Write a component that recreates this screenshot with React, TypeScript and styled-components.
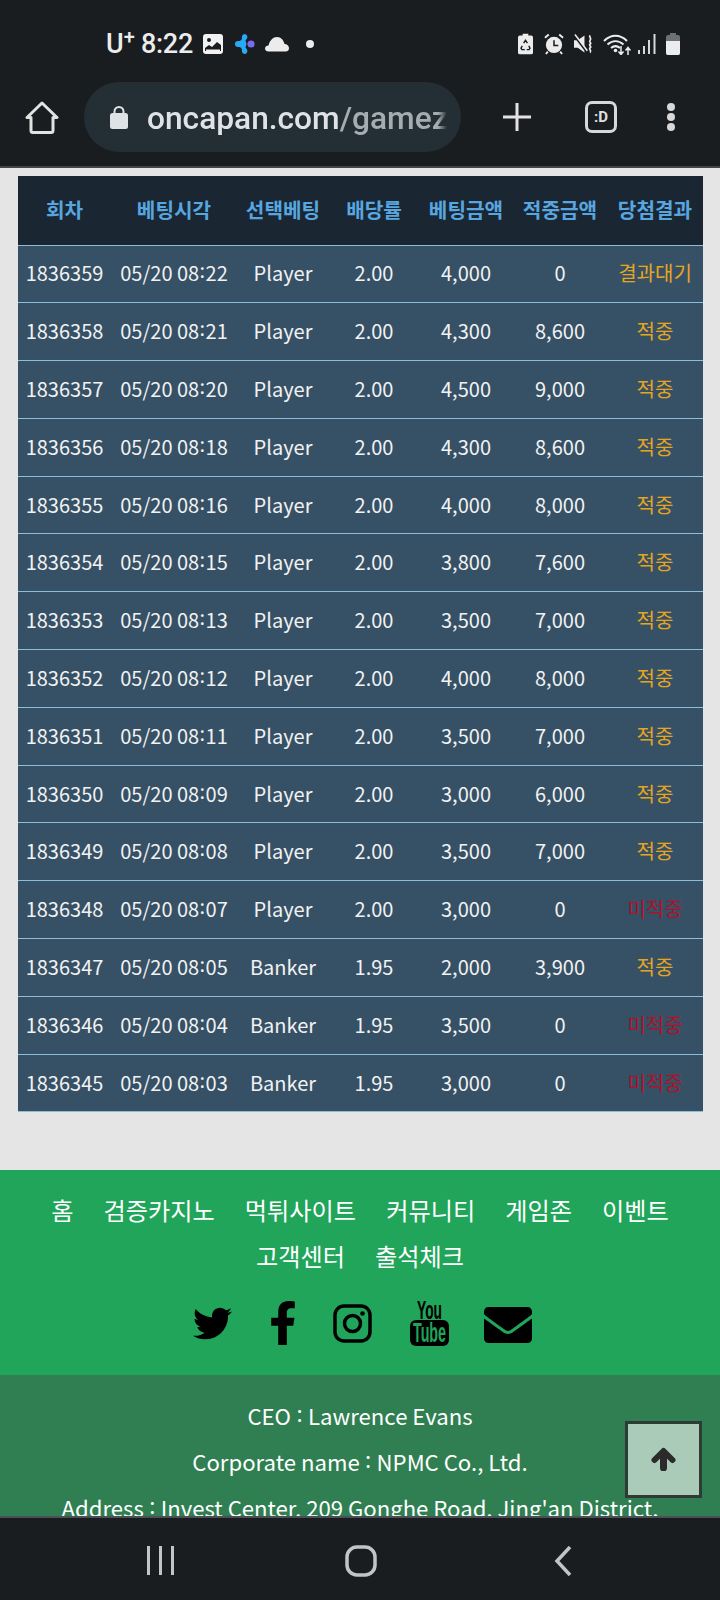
import * as React from "react";
import styled, { createGlobalStyle } from "styled-components";
import { FaEnvelope, FaFacebookF, FaTwitter } from "react-icons/fa";

const GlobalStyle = createGlobalStyle`
  html, body {
    margin: 0;
    padding: 0;
    background: #1a1d20;
  }
  * {
    box-sizing: border-box;
  }
`;

const Screen = styled.div`
  position: relative;
  width: 720px;
  height: 1600px;
  display: flex;
  flex-direction: column;
  overflow: hidden;
  font-family: "Noto Sans CJK KR", "Noto Sans", sans-serif;
`;

const Chrome = styled.header`
  flex: none;
  height: 168px;
  background: #1a1d20;
  border-bottom: 2px solid #3f474c;
`;

const StatusBar = styled.div`
  height: 82px;
  padding: 30px 40px 0 106px;
  display: flex;
  align-items: flex-start;
  justify-content: space-between;
  font-family: Roboto, sans-serif;
  color: #ececec;
`;

const StatusLeft = styled.div`
  display: flex;
  align-items: center;
  height: 28px;
`;

const Carrier = styled.span`
  font-size: 27px;
  font-weight: 500;
  display: flex;
  align-items: flex-start;
  line-height: 28px;
  width: 35px;

  sup {
    font-size: 20px;
    line-height: 20px;
    margin-top: -3px;
  }
`;

const Clock = styled.span`
  font-size: 27px;
  font-weight: 500;
  line-height: 28px;
  width: 62px;
  letter-spacing: -0.3px;
`;

const StatusRight = styled.div`
  display: flex;
  align-items: center;
  height: 28px;
`;

const Toolbar = styled.div`
  height: 84px;
  padding: 0 0 14px 0;
  display: flex;
  align-items: center;
`;

const ToolSlot = styled.div<{ $w: number }>`
  flex: none;
  width: ${(p) => p.$w}px;
  display: flex;
  align-items: center;
  justify-content: center;
`;

const UrlPill = styled.div`
  flex: none;
  width: 377px;
  height: 70px;
  border-radius: 35px;
  background: #232f35;
  display: flex;
  align-items: center;
  padding-left: 26px;
`;

const UrlText = styled.div`
  margin-left: 19px;
  padding-top: 2px;
  width: 300px;
  overflow: hidden;
  white-space: nowrap;
  font-family: Roboto, sans-serif;
  font-size: 31.7px;
  font-weight: 500;
  color: #dfe3e6;
  mask-image: linear-gradient(to right, #000 291px, transparent 300px);

  span {
    color: #a6adb2;
  }
`;

const TabBox = styled.div`
  width: 32px;
  height: 32px;
  border: 3px solid #d8d8d8;
  border-radius: 7px;
  color: #e0e0e0;
  font-family: Roboto, sans-serif;
  font-size: 15px;
  font-weight: 700;
  display: flex;
  align-items: center;
  justify-content: center;
`;

const Dots = styled.div`
  display: flex;
  flex-direction: column;
  gap: 2px;

  i {
    display: block;
    width: 8px;
    height: 8px;
    border-radius: 50%;
    background: #d8d8d8;
  }
`;

const Page = styled.main`
  flex: 1;
  min-height: 0;
  overflow: hidden;
  background: #e5e5e5;
  padding-top: 8px;
`;

const TableWrap = styled.div`
  margin: 0 17px 0 18px;
`;

const Table = styled.table`
  width: 685px;
  table-layout: fixed;
  border-collapse: collapse;
  font-size: 20px;
  text-align: center;
`;

const HeadCell = styled.th`
  height: 69px;
  padding: 0 0 2px;
  background: #1a2631;
  color: #58a6e0;
  font-weight: 700;
  font-size: 20.2px;
`;

const Row = styled.tr`
  border-top: 1px solid #8fbdd9;
  &:last-child {
    border-bottom: 1px solid #8fbdd9;
  }
`;

const Cell = styled.td<{ $status?: "hit" | "miss" }>`
  height: 57.8px;
  padding: 0 0 2px;
  background: #365166;
  white-space: nowrap;
  color: ${(p) => (p.$status === "hit" ? "#e6a520" : p.$status === "miss" ? "#ad1228" : "#f2f2f2")};
`;

const Colon = styled.span`
  display: inline-block;
  line-height: 1;
  vertical-align: 0.15em;
  margin: 0 0.02em;
`;

const FooterMenu = styled.footer`
  margin-top: 58px;
  height: 205px;
  background: #20a55a;
  padding-top: 17px;
`;

const MenuLinks = styled.div`
  display: flex;
  flex-wrap: wrap;
  justify-content: center;
  gap: 0 30px;
  padding: 0 40px;
  color: #fff;
  font-size: 24.2px;
  line-height: 46px;
`;

const Socials = styled.div`
  display: flex;
  align-items: center;
  justify-content: center;
  height: 60px;
  margin-top: 14px;
  color: #000;
`;

const SocialSlot = styled.div<{ $w: number; $drop?: number }>`
  width: ${(p) => p.$w}px;
  padding-top: ${(p) => p.$drop ?? 0}px;
  display: flex;
  align-items: center;
  justify-content: center;
`;

const CompanyInfo = styled.div`
  height: 260px;
  background: #2f7f52;
  padding-top: 17px;
  color: #fff;
  font-size: 22.15px;
  line-height: 46px;
  text-align: center;
  white-space: nowrap;
`;

const TopButton = styled.button`
  position: absolute;
  left: 625px;
  top: 1421px;
  width: 77px;
  height: 77px;
  background: #a9cbb7;
  border: 3px solid #2e3a34;
  padding: 0 0 2px;
  display: flex;
  align-items: center;
  justify-content: center;
`;

const NavBar = styled.nav`
  flex: none;
  height: 84px;
  background: #1a1d20;
  border-top: 2px solid #4a5054;
  display: grid;
  grid-template-columns: 320px 80px 1fr;
  align-items: center;
  padding-top: 3px;
`;

const NavSlot = styled.div<{ $pad: number }>`
  padding-left: ${(p) => p.$pad}px;
  display: flex;
`;

type Result = "wait" | "hit" | "miss";
type Bet = [string, string, string, string, string, string, Result];

const BETS: Bet[] = [
  ["1836359", "05/20 08:22", "Player", "2.00", "4,000", "0", "wait"],
  ["1836358", "05/20 08:21", "Player", "2.00", "4,300", "8,600", "hit"],
  ["1836357", "05/20 08:20", "Player", "2.00", "4,500", "9,000", "hit"],
  ["1836356", "05/20 08:18", "Player", "2.00", "4,300", "8,600", "hit"],
  ["1836355", "05/20 08:16", "Player", "2.00", "4,000", "8,000", "hit"],
  ["1836354", "05/20 08:15", "Player", "2.00", "3,800", "7,600", "hit"],
  ["1836353", "05/20 08:13", "Player", "2.00", "3,500", "7,000", "hit"],
  ["1836352", "05/20 08:12", "Player", "2.00", "4,000", "8,000", "hit"],
  ["1836351", "05/20 08:11", "Player", "2.00", "3,500", "7,000", "hit"],
  ["1836350", "05/20 08:09", "Player", "2.00", "3,000", "6,000", "hit"],
  ["1836349", "05/20 08:08", "Player", "2.00", "3,500", "7,000", "hit"],
  ["1836348", "05/20 08:07", "Player", "2.00", "3,000", "0", "miss"],
  ["1836347", "05/20 08:05", "Banker", "1.95", "2,000", "3,900", "hit"],
  ["1836346", "05/20 08:04", "Banker", "1.95", "3,500", "0", "miss"],
  ["1836345", "05/20 08:03", "Banker", "1.95", "3,000", "0", "miss"],
];

const HEADS = ["회차", "베팅시각", "선택베팅", "배당률", "베팅금액", "적중금액", "당첨결과"];
const WIDTHS = [93, 126, 92, 90, 94, 94, 96];
const RESULT_LABEL: Record<Result, string> = { wait: "결과대기", hit: "적중", miss: "미적중" };
const MENU = ["홈", "검증카지노", "먹튀사이트", "커뮤니티", "게임존", "이벤트", "고객센터", "출석체크"];

const withColon = (text: string) => {
  const i = text.indexOf(":");
  if (i < 0) return text;
  return (
    <>
      {text.slice(0, i)}
      <Colon>:</Colon>
      {text.slice(i + 1)}
    </>
  );
};

const GalleryIcon = () => (
  <svg width="20" height="20" viewBox="0 0 20 20" style={{ marginRight: 12 }}>
    <rect x="0" y="0" width="20" height="20" rx="3" fill="#f2f2f2" />
    <circle cx="6" cy="6" r="2" fill="#1a1d20" />
    <path d="M2 14l4-3 3 2 5-5 4 3v6H2z" fill="#1a1d20" />
    <path d="M3 15.5h14v1.5H3z" fill="#f2f2f2" />
  </svg>
);

const SparkIcon = () => (
  <svg width="20" height="20" viewBox="0 0 20 20" style={{ marginRight: 10 }}>
    <path
      d="M9.500 0a3 3 0 0 1 2.500 4.500l-1.500 2 1 3.500-1 3.500 1.500 2A3 3 0 0 1 9.500 20 3 3 0 0 1 7 16c0-1.500-1-2.500-2.500-3H3a3 3 0 0 1 0-6h1.500C6 6.500 7 5.500 7 4a3 3 0 0 1 2.500-4z"
      fill="#27a9f3"
    />
    <circle cx="16" cy="10" r="3.600" fill="#7a6cf0" />
  </svg>
);

const CloudIcon = () => (
  <svg width="24" height="16" viewBox="0 0 24 16" style={{ marginRight: 17 }}>
    <path d="M3.500 15.500c-2 0-3.500-1-3.500-3s1.700-3 3.500-3C5 4 8 1 12 1s6.500 3 7.500 7c2.500 0 4.500 2 4.500 4s-1 3.500-3.500 3.500z" fill="#ececec" />
  </svg>
);

const BatterySaverIcon = () => (
  <svg width="15" height="22" viewBox="0 0 16 22" style={{ marginRight: 11 }}>
    <path d="M5 0h6v2h3a2 2 0 0 1 2 2v16a2 2 0 0 1-2 2H2a2 2 0 0 1-2-2V4a2 2 0 0 1 2-2h3z" fill="#ececec" />
    <path d="M6 10l2-3 2 3M4.500 13l-1.300 2.500 1 1.500h3M11.500 13l1.300 2.500-1 1.500h-2.500" stroke="#1a1d20" strokeWidth="1.500" fill="none" />
  </svg>
);

const AlarmIcon = () => (
  <svg width="20" height="22" viewBox="0 0 21 22" style={{ marginRight: 10 }}>
    <circle cx="10.500" cy="12" r="8.500" fill="#ececec" />
    <path d="M10.500 7v5.500h4.500" stroke="#1a1d20" strokeWidth="1.600" fill="none" />
    <path d="M1 4.500L5 1M20 4.500L16 1M4 19l-2 2.500M17 19l2 2.500" stroke="#ececec" strokeWidth="2" />
  </svg>
);

const MuteIcon = () => (
  <svg width="20" height="20" viewBox="0 0 21 20" style={{ marginRight: 9 }}>
    <path d="M0 6h4l7-5v18l-7-5H0z" fill="#ececec" />
    <path d="M0 1l13 17" stroke="#1a1d20" strokeWidth="2" />
    <path d="M1 0l13 17" stroke="#ececec" strokeWidth="1.600" />
    <path d="M17 1c-2 2 2 3 0 5s2 3 0 4 2 3 0 4 2 3 0 5" stroke="#ececec" strokeWidth="1.800" fill="none" />
  </svg>
);

const WifiIcon = () => (
  <svg width="28" height="21" viewBox="0 0 28 21" style={{ marginRight: 7 }}>
    <path d="M1 7c7-7 16-7 23 0M4.500 10.500c5-4.500 11-4.500 16 0M8 14c3-2.500 6-2.500 9 0" stroke="#ececec" strokeWidth="2" fill="none" />
    <circle cx="12.500" cy="16.500" r="1.800" fill="#ececec" />
    <path d="M18 12v8M15.500 17.500l2.500 3 2.500-3M25 21v-7M22.500 16.500l2.500-3 2.500 3" stroke="#ececec" strokeWidth="1.500" fill="none" />
  </svg>
);

const SignalIcon = () => (
  <svg width="18" height="20" viewBox="0 0 18 20" style={{ marginRight: 10 }}>
    <path d="M0 16h2v4H0zM5 12h2v8H5zM10 6h2v14h-2zM15.500 0h2v20h-2z" fill="#d8d8d8" />
  </svg>
);

const BatteryIcon = () => (
  <svg width="14" height="22" viewBox="0 0 14 22">
    <path d="M4 0h6v2h2a2 2 0 0 1 2 2v16a2 2 0 0 1-2 2H2a2 2 0 0 1-2-2V4a2 2 0 0 1 2-2h2z" fill="#6c7174" />
    <path d="M0 8h14v12a2 2 0 0 1-2 2H2a2 2 0 0 1-2-2z" fill="#ececec" />
  </svg>
);

const HomeIcon = () => (
  <svg width="34" height="33" viewBox="0 0 34 33">
    <path d="M2 16.500L17 2l15 14.500h-4v13a2 2 0 0 1-2 2H8a2 2 0 0 1-2-2v-13z" fill="none" stroke="#e2e2e2" strokeWidth="3" strokeLinejoin="round" />
  </svg>
);

const LockIcon = () => (
  <svg width="18" height="23" viewBox="0 0 18 23" style={{ flex: "none" }}>
    <path d="M4.500 8V5.500a4.500 4.500 0 0 1 9 0V8" fill="none" stroke="#dfe3e6" strokeWidth="2" />
    <rect x="0" y="7" width="18" height="16" rx="2.500" fill="#dfe3e6" />
  </svg>
);

const PlusIcon = () => (
  <svg width="28" height="28" viewBox="0 0 28 28">
    <path d="M14 0v28M0 14h28" stroke="#e2e2e2" strokeWidth="3" />
  </svg>
);

const InstagramIcon = () => (
  <svg width="39" height="39" viewBox="0 0 39 39">
    <rect x="2" y="2" width="35" height="35" rx="9" fill="none" stroke="#000" strokeWidth="3.500" />
    <circle cx="19.500" cy="19.500" r="8" fill="none" stroke="#000" strokeWidth="3.500" />
    <circle cx="29.500" cy="9.500" r="2.300" fill="#000" />
  </svg>
);

const YoutubeIcon = () => (
  <svg width="39" height="46" viewBox="0 0 39 46">
    <text x="19.500" y="19" textAnchor="middle" fontFamily="'Liberation Sans', sans-serif" fontWeight="700" fontSize="26" textLength="25" lengthAdjust="spacingAndGlyphs">You</text>
    <rect x="0" y="20" width="39" height="26" rx="6" fill="#000" />
    <text x="19.500" y="42" textAnchor="middle" fill="#20a55a" fontFamily="'Liberation Sans', sans-serif" fontWeight="700" fontSize="27" textLength="33" lengthAdjust="spacingAndGlyphs">Tube</text>
  </svg>
);

const ArrowUpIcon = () => (
  <svg width="25" height="24" viewBox="0 0 25 24">
    <path d="M12.500 21V6" stroke="#2b2b2b" strokeWidth="7" strokeLinecap="round" />
    <path d="M3.500 13l9-9 9 9" fill="none" stroke="#2b2b2b" strokeWidth="6" strokeLinecap="round" strokeLinejoin="round" />
  </svg>
);

const App = () => (
  <Screen>
    <GlobalStyle />
    <Chrome>
      <StatusBar>
        <StatusLeft>
          <Carrier>
            U<sup>+</sup>
          </Carrier>
          <Clock>8:22</Clock>
          <GalleryIcon />
          <SparkIcon />
          <CloudIcon />
          <svg width="8" height="8">
            <circle cx="4" cy="4" r="4" fill="#ececec" />
          </svg>
        </StatusLeft>
        <StatusRight>
          <BatterySaverIcon />
          <AlarmIcon />
          <MuteIcon />
          <WifiIcon />
          <SignalIcon />
          <BatteryIcon />
        </StatusRight>
      </StatusBar>
      <Toolbar>
        <ToolSlot $w={84}>
          <HomeIcon />
        </ToolSlot>
        <UrlPill>
          <LockIcon />
          <UrlText>oncapan.com<span>/gamezone</span></UrlText>
        </UrlPill>
        <ToolSlot $w={112}>
          <PlusIcon />
        </ToolSlot>
        <ToolSlot $w={56}>
          <TabBox>:D</TabBox>
        </ToolSlot>
        <ToolSlot $w={84}>
          <Dots>
            <i />
            <i />
            <i />
          </Dots>
        </ToolSlot>
      </Toolbar>
    </Chrome>
    <Page>
      <TableWrap>
        <Table>
          <colgroup>
            {WIDTHS.map((w, i) => (
              <col key={i} width={w} />
            ))}
          </colgroup>
          <thead>
            <tr>
              {HEADS.map((h) => (
                <HeadCell key={h}>{h}</HeadCell>
              ))}
            </tr>
          </thead>
          <tbody>
            {BETS.map((b) => (
              <Row key={b[0]}>
                {b.slice(0, 6).map((v, i) => (
                  <Cell key={i}>{withColon(v)}</Cell>
                ))}
                <Cell $status={b[6] === "miss" ? "miss" : "hit"}>{RESULT_LABEL[b[6]]}</Cell>
              </Row>
            ))}
          </tbody>
        </Table>
      </TableWrap>
      <FooterMenu>
        <MenuLinks>
          {MENU.map((m) => (
            <span key={m}>{m}</span>
          ))}
        </MenuLinks>
        <Socials>
          <SocialSlot $w={70}>
            <FaTwitter size={39} />
          </SocialSlot>
          <SocialSlot $w={72}>
            <FaFacebookF size={44} />
          </SocialSlot>
          <SocialSlot $w={66}>
            <InstagramIcon />
          </SocialSlot>
          <SocialSlot $w={88}>
            <YoutubeIcon />
          </SocialSlot>
          <SocialSlot $w={70} $drop={4}>
            <FaEnvelope size={48} />
          </SocialSlot>
        </Socials>
      </FooterMenu>
      <CompanyInfo>
        <div>{withColon("CEO : Lawrence Evans")}</div>
        <div>{withColon("Corporate name : NPMC Co., Ltd.")}</div>
        <div>{withColon("Address : Invest Center, 209 Gonghe Road, Jing'an District,")}</div>
      </CompanyInfo>
    </Page>
    <TopButton>
      <ArrowUpIcon />
    </TopButton>
    <NavBar>
      <NavSlot $pad={147}>
        <svg width="27" height="29" viewBox="0 0 27 29">
          <path d="M1.500 0v29M13.500 0v29M25.500 0v29" stroke="#c4c4c4" strokeWidth="3" />
        </svg>
      </NavSlot>
      <NavSlot $pad={25}>
        <svg width="32" height="32" viewBox="0 0 32 32">
          <rect x="2" y="2" width="28" height="28" rx="10" fill="none" stroke="#c4c4c4" strokeWidth="3.500" />
        </svg>
      </NavSlot>
      <NavSlot $pad={154}>
        <svg width="18" height="30" viewBox="0 0 18 30">
          <path d="M16 1L3 15l13 14" fill="none" stroke="#c4c4c4" strokeWidth="3.500" />
        </svg>
      </NavSlot>
    </NavBar>
  </Screen>
);

export default App;
